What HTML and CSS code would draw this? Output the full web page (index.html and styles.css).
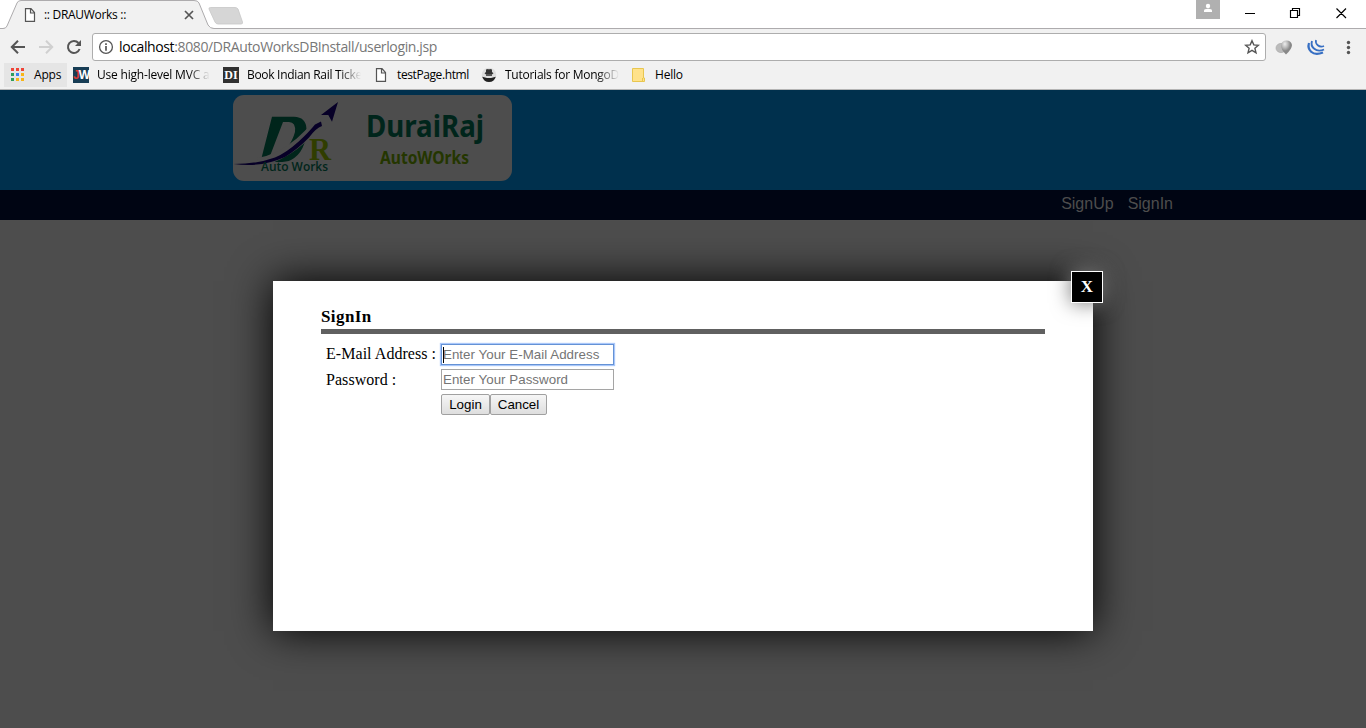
FILE: index.html
```
<!DOCTYPE html>
<html lang="en">
<head>
<meta charset="utf-8">
<title>:: DRAUWorks ::</title>
<link rel="stylesheet" href="styles.css">
</head>
<body>
<div class="browser">
  <div class="titlebar">
    <div class="tab">
      <svg class="tab-shape" width="246" height="29" viewBox="0 0 246 29">
        <path d="M0 29V28.500H3Q6 28.500 7 26L17 3Q18 .5 21 .5H194Q198 .5 199 3L208 25Q210 28.500 214 28.500H246V29Z" fill="#f1f1f1"/>
        <path d="M0 28.500H3Q6 28.500 7 26L17 3Q18 .5 21 .5H194Q198 .5 199 3L208 25Q210 28.500 214 28.500H246" fill="none" stroke="#adabad"/>
        <path d="M210.500 7.500H235Q237 7.500 238 9L242.500 22Q243 24 241 24H218Q216 24 215 22L209 9Q208.500 7.500 210.500 7.500Z" fill="#d6d6d6" stroke="#c6c6c6" stroke-width=".8"/>
      </svg>
      <div class="tab-content">
        <svg width="12" height="14" viewBox="0 0 12 14"><path d="M1.500.7H7L10.500 4.500V13.300H1.500ZM6.500.7V5H10.500" fill="#fff" stroke="#555" stroke-width="1.200"/></svg>
        <span class="tab-title">:: DRAUWorks ::</span>
        <svg class="tab-close" width="10" height="10" viewBox="0 0 10 10"><path d="M1 1L9 9M9 1L1 9" stroke="#555" stroke-width="1.700"/></svg>
      </div>
    </div>
    <svg class="window-controls" width="170" height="28" viewBox="1196 0 170 28">
      <path d="M1196 0H1220V19H1196Z" fill="#b0b0b0"/>
      <circle cx="1208" cy="6" r="2.200" fill="#fff"/><path d="M1204 12V10.500Q1204 8.800 1208 8.800T1212 10.500V12Z" fill="#fff"/>
      <path d="M1245 13.500H1255M1290.500 10.500H1297.500V17.500H1290.500ZM1292.500 10V8.500H1299.500V15.500H1298M1336.500 8.500L1346 18M1346 8.500L1336.500 18" fill="none" stroke="#000" stroke-width="1.150"/>
    </svg>
  </div>
  <div class="toolbar">
    <svg class="nav-icons" width="92" height="34" viewBox="0 29 92 34">
      <path d="M25 47H12.500M18 40.800L11.800 47L18 53.200" fill="none" stroke="#555" stroke-width="2"/>
      <path d="M39 47H51.500M46 40.800L52.200 47L46 53.200" fill="none" stroke="#d0d0d0" stroke-width="2"/>
      <path d="M78.500 43A6 6 0 1 0 79.600 49" fill="none" stroke="#555" stroke-width="2"/><path d="M81 40V46H75Z" fill="#555"/>
    </svg>
    <div class="address">
      <svg width="16" height="16" viewBox="0 0 16 16"><circle cx="8" cy="8" r="6.400" fill="none" stroke="#555" stroke-width="1.300"/><path d="M8 7V11.800M8 4.200V5.900" stroke="#555" stroke-width="1.700"/></svg>
      <span class="url"><span class="host">localhost</span>:8080/DRAutoWorksDBInstall/userlogin.jsp</span>
      <svg class="star" width="16" height="16" viewBox="0 0 16 16"><path d="M8 1.700L9.800 5.900L14.400 6.300L10.900 9.300L12 13.800L8 11.400L4 13.800L5.100 9.300L1.600 6.300L6.200 5.900Z" fill="none" stroke="#555" stroke-width="1.400"/></svg>
    </div>
    <svg class="extensions" width="100" height="34" viewBox="1266 29 100 34">
      <defs><radialGradient id="pearl" cx="35%" cy="25%"><stop offset="0" stop-color="#eee"/><stop offset=".6" stop-color="#b5b5b5"/><stop offset="1" stop-color="#888"/></radialGradient></defs>
      <ellipse cx="1281" cy="48" rx="5" ry="4.600" fill="#bbb" stroke="#aaa" stroke-width=".7"/>
      <path d="M1281 45A5.600 5.600 0 0 1 1292 45Q1292 49 1286 54.500Q1281 50 1281 45Z" fill="url(#pearl)"/>
      <g fill="none" stroke="#376fc3"><path d="M1309 43C1307 49 1312 57 1323 52.500" stroke-width="2.200"/><path d="M1312 41C1310 47 1316 53 1324 49.500" stroke-width="1.900"/><path d="M1316 40C1315 44 1319 48 1324 46" stroke-width="1.700"/></g>
      <g fill="#555"><circle cx="1348.500" cy="42.500" r="1.700"/><circle cx="1348.500" cy="47.500" r="1.700"/><circle cx="1348.500" cy="52.500" r="1.700"/></g>
    </svg>
  </div>
  <div class="bookmarks">
    <div class="bookmark apps">
      <svg width="14" height="14" viewBox="0 0 14 14"><path d="M0 0H3V3H0ZM5 0H8V3H5ZM10 0H13V3H10Z" fill="#ef4437"/><path d="M0 5H3V8H0ZM0 10H3V13H0Z" fill="#2f9e5b"/><path d="M5 5H8V8H5Z" fill="#3b82f0"/><path d="M10 5H13V8H10ZM5 10H8V13H5ZM10 10H13V13H10Z" fill="#f8b517"/></svg><span>Apps</span>
    </div>
    <div class="bookmark mvc"><span class="favicon jw"><b>J</b>W</span><span class="label fade">Use high-level MVC a</span></div>
    <div class="bookmark rail"><span class="favicon di">DI</span><span class="label fade">Book Indian Rail Ticke</span></div>
    <div class="bookmark test"><svg width="12" height="14" viewBox="0 0 12 14"><path d="M1.500.7H7L10.500 4.500V13.300H1.500ZM6.500.7V5H10.500" fill="#fff" stroke="#555" stroke-width="1.200"/></svg><span class="label">testPage.html</span></div>
    <div class="bookmark mongo"><svg width="16" height="16" viewBox="0 0 16 16"><circle cx="8" cy="8" r="7.300" fill="#dedede"/><path d="M5 2.500L7 2L8 2.600L9 2L11 2.500V5L12.500 6.200L11 7.500H5L3.500 6.200L5 5Z" fill="#333"/><path d="M5 7H11V9H5Z" fill="#555"/><path d="M1.200 9.800L6 11H10L14.800 9.800Q13 15 8 15T1.200 9.800Z" fill="#222"/></svg><span class="label fade">Tutorials for MongoD</span></div>
    <div class="bookmark hello"><svg width="13" height="15" viewBox="0 0 13 15"><path d="M.5.5H11.500V10H12.500V13.500H.5Z" fill="#ffe28a" stroke="#e8c64f"/><path d="M10.500 13V10" stroke="#e8c64f"/></svg><span class="label">Hello</span></div>
  </div>
</div>
<div class="page">
  <header class="site-header">
    <svg class="logo" width="279" height="86" viewBox="233 95 279 86">
      <path d="M272 116.700H294Q306 117 306.500 129Q306 152 291 160Q287 162 278 162H268L261.500 158ZM283 122L270 156H275Q290 150 295 132Q296 122 289 122Z" fill="#00251b" fill-rule="evenodd"/>
      <path d="M258 161.500Q279 158 298 142Q308 133 316 124" fill="none" stroke="#4d4d4d" stroke-width="7"/>
      <path d="M262 164.500Q286 159 308 138" fill="none" stroke="#4d4d4d" stroke-width="2.500"/>
      <path d="M233.700 164Q257 164 275 157.500Q286 153 298.700 141.500Q309 132 315 124.500L321 121.500L322 126Q316 128 309 137.500Q298 149 285 157Q261 168 233.700 164Z" fill="#070027"/>
      <path d="M338 102L321 115L328.300 115L332 121.700Z" fill="#070027"/>
      <text class="logo-r" x="309" y="160" textLength="22" lengthAdjust="spacingAndGlyphs">R</text>
      <text class="logo-small" x="261" y="171" textLength="67" lengthAdjust="spacingAndGlyphs">Auto Works</text>
      <text class="logo-name" x="366" y="137" textLength="118" lengthAdjust="spacingAndGlyphs">DuraiRaj</text>
      <text class="logo-sub" x="380" y="164" textLength="89" lengthAdjust="spacingAndGlyphs">AutoWOrks</text>
    </svg>
  </header>
  <nav class="site-nav"><span>SignUp</span><span>SignIn</span></nav>
  <main class="stage">
    <section class="dialog">
      <div class="dialog-close">X</div>
      <h1>SignIn</h1>
      <form class="login">
        <label for="email">E-Mail Address :</label><div class="field focused"><i class="caret"></i><input id="email" placeholder="Enter Your E-Mail Address"></div>
        <label for="password">Password :</label><div class="field"><input id="password" type="password" placeholder="Enter Your Password"></div>
        <div class="actions"><button type="button" class="login-button">Login</button><button type="button" class="cancel-button">Cancel</button></div>
      </form>
    </section>
  </main>
</div>
</body>
</html>
```
FILE: styles.css
```
* { box-sizing: border-box; }
body { margin: 0; width: 1366px; height: 728px; overflow: hidden; background: #4d4d4d; font-family: "Liberation Serif", serif; }
svg { display: block; flex: none; }
.browser { height: 90px; background: #f1f1f1; border-bottom: 1px solid #b5b5b5; font-family: "Open Sans", sans-serif; color: #000; }
.titlebar { height: 29px; background: #fff; border-bottom: 1px solid #adabad; display: flex; justify-content: space-between; }
.tab { position: relative; width: 246px; height: 29px; }
.tab-shape { position: absolute; left: 0; top: 0; }
.tab-content { position: relative; height: 29px; display: flex; align-items: center; padding: 1px 0 0 24px; font-size: 12px; }
.tab-title { margin-left: 8px; width: 140px; letter-spacing: -.3px; line-height: 16px; padding-bottom: 1px; white-space: nowrap; }
.toolbar { height: 34px; display: flex; }
.address { width: 1174px; height: 28px; margin-top: 4px; border: 1px solid #adadad; border-radius: 3px; background: #fff; display: flex; align-items: center; padding: 0 5px; }
.url { margin-left: 5px; font-size: 14px; line-height: 20px; color: #777; letter-spacing: -.38px; white-space: nowrap; }
.host { color: #000; }
.star { margin-left: auto; }
.bookmarks { height: 26px; display: flex; padding-left: 4px; font-size: 12px; letter-spacing: -.2px; line-height: 24px; }
.bookmark { height: 24px; display: flex; align-items: center; white-space: nowrap; }
.apps { width: 63px; background: #e5e5e5; padding-left: 7px; gap: 9px; }
.mvc { width: 144px; margin-left: 6px; gap: 8px; }
.rail { width: 141px; margin-left: 6px; gap: 8px; }
.test { width: 100px; margin-left: 11px; gap: 10px; letter-spacing: -.4px; }
.mongo { width: 137px; margin-left: 6px; gap: 8px; }
.hello { gap: 10px; margin-left: 14px; }
.fade { -webkit-mask-image: linear-gradient(90deg, #000 calc(100% - 22px), transparent); mask-image: linear-gradient(90deg, #000 calc(100% - 22px), transparent); }
.mvc .label { width: 113px; }
.rail .label { width: 114px; letter-spacing: -.3px; }
.mongo .label { width: 115px; letter-spacing: -.25px; }
.favicon { width: 16px; height: 16px; flex: none; color: #fff; text-align: center; }
.jw { background: #173d55; font: bold 12px/16px "Liberation Sans", sans-serif; letter-spacing: -1px; display: flex; justify-content: center; }
.jw b { color: #d63a35; }
.di { background: #303030; font: bold 12px/16px "Liberation Serif", serif; letter-spacing: 0; }
.site-header { height: 100px; background: #00304d; padding: 5px 0 0 233px; }
.logo { border-radius: 11px; background: #4d4d4d; }
.logo-r { font: bold 32px "Liberation Serif", serif; fill: #303d00; }
.logo-small { font: 600 12px "Open Sans", "Noto Sans", sans-serif; fill: #00251b; }
.logo-name { font: bold 30px "Noto Sans", sans-serif; fill: #00251b; }
.logo-sub { font: bold 18px "Noto Sans", sans-serif; fill: #243600; }
.site-nav { height: 30px; background: #000513; color: #4d4d4d; display: flex; justify-content: flex-end; gap: 14px; padding: 4px 193px 0 0; font: 16px/20px "Liberation Sans", sans-serif; }
.stage { padding: 61px 0 0 273px; }
.dialog { position: relative; width: 820px; height: 350px; background: #fff; box-shadow: 0 0 40px #000; padding: 26px 48px; }
.dialog-close { position: absolute; top: -10px; right: -10px; width: 32px; height: 32px; background: #000; border: 1px solid #fff; color: #fff; font: bold 17px/30px "Liberation Serif", serif; text-align: center; box-shadow: 0 0 20px #777; }
h1 { margin: 0; height: 27px; border-bottom: 5px solid #606060; font-size: 17px; line-height: 20px; letter-spacing: .4px; }
.login { display: grid; grid-template-columns: 111px 174px; grid-template-rows: 22px 21px 21px; column-gap: 4px; row-gap: 4px; padding: 9px 0 0 5px; font-size: 16px; line-height: 22px; white-space: nowrap; letter-spacing: .05px; }
.field { height: 21px; width: 173px; border: 1px solid #a5a5a5; background: #fff; }
.focused { position: relative; height: 21px; margin-top: 1px; border-color: #6592d5; box-shadow: 0 0 1px 1px #a9c7fa; }
.field input { display: block; width: 100%; height: 19px; border: 0; padding: 0 1px; outline: 0; font: 13.333px/19px "Liberation Sans", sans-serif; letter-spacing: .03px; }
.field input::placeholder { color: #757575; }
.caret { position: absolute; left: 1px; top: 2px; width: 1px; height: 16px; background: #000; }
.actions { grid-column: 2; display: flex; }
button { height: 21px; padding: 0; border: 1px solid #a0a0a0; border-radius: 2px; background: linear-gradient(#f6f6f6, #dedede); color: #000; font: 13.333px/17px "Liberation Sans", sans-serif; }
.login-button { width: 49px; }
.cancel-button { width: 57px; }
```
